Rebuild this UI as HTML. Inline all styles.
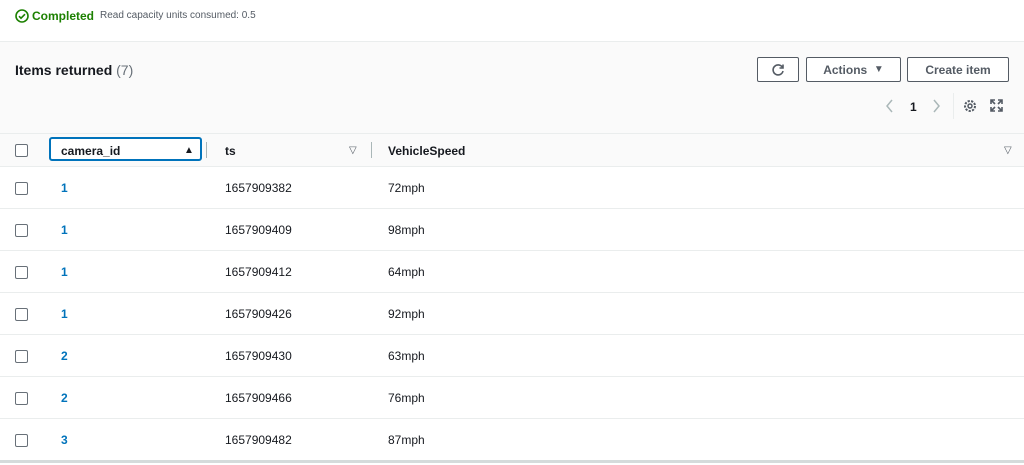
<!DOCTYPE html>
<html><head><style>
body{margin:0;width:1024px;height:465px;overflow:hidden;background:#fff;font-family:"Liberation Sans",sans-serif;font-size:12px;color:#16191f;position:relative}
.abs{position:absolute}
.btn{position:absolute;top:57px;height:25px;border:1px solid #545b64;border-radius:2px;background:#fff;box-sizing:border-box;font-weight:bold;color:#545b64;font-size:12px;display:flex;align-items:center;justify-content:center}
.cb{position:absolute;left:15px;width:11px;height:11px;border:1px solid #687078;border-radius:2px;background:#fff}
.row{position:absolute;left:0;width:1024px;height:42px;border-top:1px solid #eaeded}
.row span{position:absolute;top:14px}
</style></head><body>
<svg class="abs" style="left:15px;top:9px" width="14" height="14" viewBox="0 0 14 14"><circle cx="7" cy="7" r="6" fill="none" stroke="#1d8102" stroke-width="1.6"/><path d="M4 7.2l2 2 4-4" fill="none" stroke="#1d8102" stroke-width="1.6"/></svg>
<div class="abs" style="left:32px;top:9px;color:#1d8102;font-weight:bold;font-size:12px">Completed</div>
<div class="abs" style="left:100px;top:10px;color:#545b64;font-size:10px">Read capacity units consumed: 0.5</div>
<div class="abs" style="left:0;top:41px;width:1024px;height:125px;background:#fafafa;border-top:1px solid #eaeded"></div>
<div class="abs" style="left:15px;top:62px;font-size:14px;font-weight:bold">Items returned <span style="color:#687078;font-weight:normal">(7)</span></div>
<div class="btn" style="left:757px;width:42px"><svg width="14" height="14" viewBox="0 0 14 14"><path d="M11.5 4.5A5 5 0 1 0 12 8" fill="none" stroke="#545b64" stroke-width="1.6"/><path d="M12 1.5v3.5H8.5" fill="none" stroke="#545b64" stroke-width="1.6"/></svg></div>
<div class="btn" style="left:806px;width:95px">Actions&nbsp;&nbsp;<span style="font-size:10px">▼</span></div>
<div class="btn" style="left:907px;width:102px">Create item</div>
<svg class="abs" style="left:885px;top:99px" width="10" height="14" viewBox="0 0 10 14"><path d="M7 1L2 7l5 6" fill="none" stroke="#aab7b8" stroke-width="1.5"/></svg>
<div class="abs" style="left:910px;top:100px;font-weight:bold;font-size:12px">1</div>
<svg class="abs" style="left:931px;top:99px" width="10" height="14" viewBox="0 0 10 14"><path d="M3 1l5 6-5 6" fill="none" stroke="#aab7b8" stroke-width="1.5"/></svg>
<div class="abs" style="left:953px;top:93px;width:1px;height:26px;background:#eaeded"></div>
<svg class="abs" style="left:963px;top:99px" width="14" height="14" viewBox="0 0 14 14"><circle cx="7" cy="7" r="5" fill="none" stroke="#545b64" stroke-width="2" stroke-dasharray="2.2 1.3"/><circle cx="7" cy="7" r="2" fill="none" stroke="#545b64" stroke-width="1.5"/></svg>
<svg class="abs" style="left:990px;top:99px" width="13" height="13" viewBox="0 0 13 13"><path d="M1 5V1h4M8 1h4v4M12 8v4H8M5 12H1V8M1 1l4 4M12 1L8 5M12 12L8 8M1 12l4-4" fill="none" stroke="#545b64" stroke-width="1.6"/></svg>
<div class="abs" style="left:0;top:133px;width:1024px;height:33px;border-top:1px solid #eaeded;background:#fafafa"></div>
<div class="cb" style="top:144px"></div>
<div class="abs" style="left:49px;top:137px;width:153px;height:24px;border:2px solid #0073bb;border-radius:3px;box-sizing:border-box;background:#fff"></div>
<div class="abs" style="left:61px;top:144px;font-weight:bold">camera_id</div>
<div class="abs" style="left:184px;top:145px;font-size:10px">▲</div>
<div class="abs" style="left:206px;top:142px;width:1px;height:16px;background:#aab7b8"></div>
<div class="abs" style="left:225px;top:144px;font-weight:bold">ts</div>
<div class="abs" style="left:349px;top:145px;font-size:10px;color:#545b64">▽</div>
<div class="abs" style="left:371px;top:142px;width:1px;height:16px;background:#aab7b8"></div>
<div class="abs" style="left:388px;top:144px;font-weight:bold">VehicleSpeed</div>
<div class="abs" style="left:1004px;top:145px;font-size:10px;color:#545b64">▽</div>
<div class="row" style="top:166px"><div class="cb" style="top:15px"></div><span style="left:61px;color:#0073bb;font-weight:bold">1</span><span style="left:225px">1657909382</span><span style="left:388px">72mph</span></div>
<div class="row" style="top:208px"><div class="cb" style="top:15px"></div><span style="left:61px;color:#0073bb;font-weight:bold">1</span><span style="left:225px">1657909409</span><span style="left:388px">98mph</span></div>
<div class="row" style="top:250px"><div class="cb" style="top:15px"></div><span style="left:61px;color:#0073bb;font-weight:bold">1</span><span style="left:225px">1657909412</span><span style="left:388px">64mph</span></div>
<div class="row" style="top:292px"><div class="cb" style="top:15px"></div><span style="left:61px;color:#0073bb;font-weight:bold">1</span><span style="left:225px">1657909426</span><span style="left:388px">92mph</span></div>
<div class="row" style="top:334px"><div class="cb" style="top:15px"></div><span style="left:61px;color:#0073bb;font-weight:bold">2</span><span style="left:225px">1657909430</span><span style="left:388px">63mph</span></div>
<div class="row" style="top:376px"><div class="cb" style="top:15px"></div><span style="left:61px;color:#0073bb;font-weight:bold">2</span><span style="left:225px">1657909466</span><span style="left:388px">76mph</span></div>
<div class="row" style="top:418px"><div class="cb" style="top:15px"></div><span style="left:61px;color:#0073bb;font-weight:bold">3</span><span style="left:225px">1657909482</span><span style="left:388px">87mph</span></div>
<div class="abs" style="left:0;top:460px;width:1024px;height:3px;background:#d5dbdb"></div>
</body></html>
